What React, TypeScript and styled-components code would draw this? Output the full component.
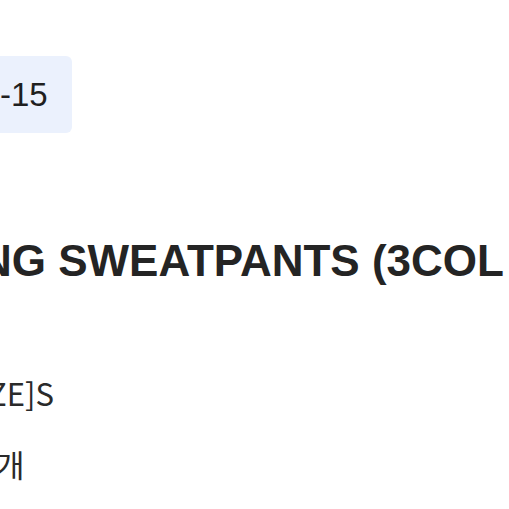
import React from "react";
import styled, { createGlobalStyle } from "styled-components";

const GlobalStyle = createGlobalStyle`
  html, body {
    margin: 0;
    padding: 0;
    background: #ffffff;
    overflow: hidden;
  }
  body {
    font-family: "Liberation Sans", "Noto Sans CJK KR", sans-serif;
    color: #222222;
  }
`;

const Page = styled.div`
  width: 509px;
  height: 509px;
  overflow: hidden;
`;

const Column = styled.div`
  display: flex;
  flex-direction: column;
  align-items: flex-start;
  padding-top: 56px;
`;

const DateBadge = styled.div`
  background: #ebf1fd;
  border-radius: 0 6px 6px 0;
  height: 77px;
  display: flex;
  align-items: center;
  padding: 0 24px 0 0;
  font-size: 33px;
  color: #1f1f1f;
`;

const Title = styled.h1`
  margin: 100px 0 0 -20px;
  font-size: 44px;
  line-height: 56px;
  font-weight: 700;
  color: #242424;
  white-space: nowrap;
`;

const Details = styled.div`
  margin-top: 81px;
  display: flex;
  flex-direction: column;
  gap: 26px;
`;

// the lines start left of the visible crop, so each one has its own shift
const Line = styled.p<{ shift?: number }>`
  margin: 0 0 0 ${(p) => p.shift ?? 0}px;
  font-family: "Noto Sans CJK KR", "Liberation Sans", sans-serif;
  font-size: 31px;
  line-height: 45px;
  color: #2a2a2a;
  white-space: nowrap;
`;

export default function App() {
  return (
    <Page>
      <GlobalStyle />
      <Column>
        <DateBadge>-15</DateBadge>
        <Title>NG SWEATPANTS (3COL</Title>
        <Details>
          <Line shift={-12}>ZE]S</Line>
          <Line shift={-4}>개</Line>
        </Details>
      </Column>
    </Page>
  );
}
